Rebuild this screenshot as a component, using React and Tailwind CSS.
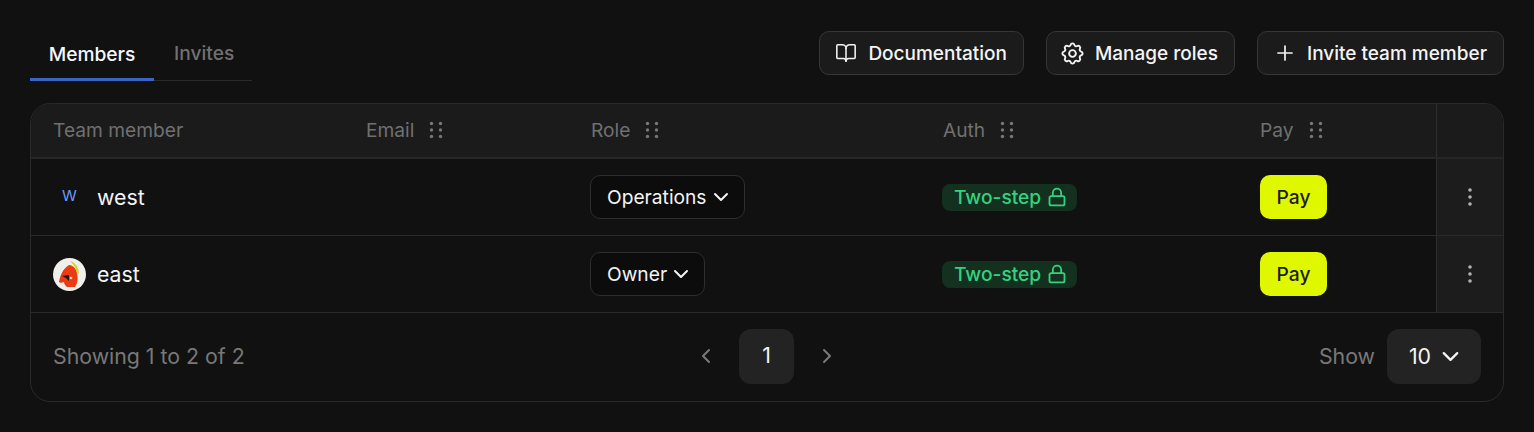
import React from 'react';
import { BookOpen, Plus, ChevronDown, ChevronLeft, ChevronRight, Lock, EllipsisVertical } from 'lucide-react';
import { TbSettings } from 'react-icons/tb';

const gridCols = 'grid grid-cols-[313px_225px_352px_317px_198px_67px]';

const Grip = () => (
  <svg viewBox="0 0 14 18" className="h-[18px] w-[14px] fill-[#777777]">
    <circle cx="2.5" cy="2.5" r="1.7" />
    <circle cx="11.5" cy="2.5" r="1.7" />
    <circle cx="2.5" cy="9" r="1.7" />
    <circle cx="11.5" cy="9" r="1.7" />
    <circle cx="2.5" cy="15.5" r="1.7" />
    <circle cx="11.5" cy="15.5" r="1.7" />
  </svg>
);

const HeaderCell = ({ label, grip = true }) => (
  <div className="flex items-center gap-[15px] pl-[22px] text-[19.2px] text-[#707070]">
    {label}
    {grip && <Grip />}
  </div>
);

const ActionButton = ({ icon: Icon, children, iconClass = 'size-[22px]' }) => (
  <button className="flex h-[44px] items-center gap-[11px] rounded-[10px] border border-[#363636] bg-[#1b1b1b] pl-[15px] pr-[16px] text-[19px] font-medium text-[#f4f4f4]">
    <Icon className={iconClass} strokeWidth={1.7} />
    <span className="pt-[2px]">{children}</span>
  </button>
);

const Avatar = () => (
  <svg viewBox="0 0 33 33" className="size-[33px]">
    <circle cx="16.5" cy="16.5" r="16.5" fill="#f1efec" />
    <path d="M17 3 C22 4 26 9 26 16 L23.5 13 C22 8 20 6 17 3Z" fill="#c6dc28" />
    <path d="M16 7 C21 7 24 12 24.5 18 C25 23 24 26 22 29 L14 29 C12 27 11 26 11 24 C9 25 7 25 6 24 C7 19 9 11 16 7Z" fill="#ea3b12" />
    <path d="M9 18 L16 17 L16 23 L13 20 Z" fill="#2a1410" />
    <circle cx="18" cy="20" r="1.3" fill="#f6d9cf" />
  </svg>
);

const Row = ({ name, avatar, role }) => (
  <div className={`${gridCols} h-[77px] items-center border-b border-[#2a2a2a]`}>
    <div className="flex items-center gap-[11px] pl-[22px] text-[21.3px] text-[#f4f4f4]">
      {avatar}
      <span className="pt-[2px]">{name}</span>
    </div>
    <div />
    <div className="pl-[21px]">
      <button className="flex h-[44px] items-center gap-[2px] rounded-[10px] border border-[#2e2e2e] bg-[#0c0c0c] pl-[16px] pr-[11px] text-[19.2px] text-[#f4f4f4]">
        {role}
        <ChevronDown className="size-[24px]" strokeWidth={2} />
      </button>
    </div>
    <div className="pl-[21px]">
      <span className="inline-flex h-[27px] items-center gap-[6px] rounded-[8px] bg-[#14301f] pl-[12px] pr-[10px] text-[19.2px] font-medium text-[#34d27f]">
        Two-step
        <Lock className="size-[20px]" strokeWidth={2.2} />
      </span>
    </div>
    <div className="pl-[22px]">
      <button className="h-[44px] w-[67px] rounded-[10px] bg-[#dff800] text-[19.2px] font-medium text-[#1c1c1c]">Pay</button>
    </div>
    <div className="flex h-full items-center justify-center border-l border-[#2e2e2e] bg-[#1c1c1c]">
      <EllipsisVertical className="size-[24px] text-[#b4b4b4]" strokeWidth={1.6} />
    </div>
  </div>
);

export default function App() {
  return (
    <div className="min-h-[432px] bg-[#111111] pl-[30px] pr-[30px] pt-[30px] font-['Inter',sans-serif]">
      <div className="flex items-start justify-between">
        <div className="flex h-[51px] w-[222px] border-b border-[#2a2a2a]">
          <div className="-mb-px flex h-[51px] w-[124px] items-center justify-center border-b-[3px] border-[#3a64c8] text-[19.2px] font-medium text-[#f4f8ff]">Members</div>
          <div className="flex h-[47px] items-center pl-[20px] text-[19.2px] font-medium text-[#707070]">Invites</div>
        </div>
        <div className="flex gap-[22px] pt-px">
          <ActionButton icon={BookOpen}>Documentation</ActionButton>
          <ActionButton icon={TbSettings} iconClass="size-[27px] -mx-[2.5px]">Manage roles</ActionButton>
          <ActionButton icon={Plus} iconClass="size-[24px] -mr-px">Invite team member</ActionButton>
        </div>
      </div>

      <div className="mt-[22px] overflow-hidden rounded-[20px] border border-[#2a2a2a]">
        <div className={`${gridCols} h-[55px] items-center border-b-2 border-[#262626] bg-[#1b1b1b]`}>
          <HeaderCell label="Team member" grip={false} />
          <HeaderCell label="Email" />
          <HeaderCell label="Role" />
          <HeaderCell label="Auth" />
          <HeaderCell label="Pay" />
          <div className="h-full border-l border-[#2e2e2e]" />
        </div>
        <Row
          name="west"
          role="Operations"
          avatar={<span className="flex size-[33px] items-center justify-center pb-px text-[15px] text-[#6c9cff]">W</span>}
        />
        <Row name="east" role="Owner" avatar={<Avatar />} />
        <div className="grid h-[88px] grid-cols-[1fr_146px_1fr] items-center pb-[2px] pl-[22px] pr-[22px]">
          <div className="pt-[2px] text-[21.3px] text-[#787878]">Showing 1 to 2 of 2</div>
          <div className="flex items-center gap-[21px] pr-px">
            <ChevronLeft className="size-[24px] text-[#7a7a7a]" strokeWidth={2} />
            <div className="flex size-[55px] items-center justify-center rounded-[12px] bg-[#232323] text-[21.3px] text-[#f4f4f4]">1</div>
            <ChevronRight className="size-[24px] text-[#7a7a7a]" strokeWidth={2} />
          </div>
          <div className="flex items-center justify-end gap-[12px]">
            <span className="pt-[2px] text-[21.3px] text-[#787878]">Show</span>
            <button className="flex h-[55px] w-[94px] items-center justify-center gap-[6px] rounded-[12px] bg-[#232323] pl-[5px] text-[21.3px] text-[#f4f4f4]">
              <span className="pt-[2px]">10</span>
              <ChevronDown className="size-[27px]" strokeWidth={2} />
            </button>
          </div>
        </div>
      </div>
    </div>
  );
}
